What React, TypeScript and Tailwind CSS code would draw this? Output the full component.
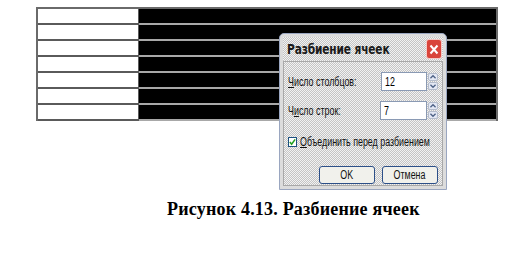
import React from 'react';

const rows = [0, 1, 2, 3, 4, 5, 6];

const dither =
  'bg-[repeating-conic-gradient(#c4c4c4_0_25%,#f2f2f2_0_50%)] bg-[length:2px_2px]';

// the dialog's font is narrow, so squeeze the text horizontally
const narrow = 'inline-block scale-x-[0.74] origin-left whitespace-nowrap';

const Spinner: React.FC = () => (
  <div className="w-[10px] h-[17px] ml-[1px] flex flex-col gap-[1px]">
    {['M1 5 L4 2 L7 5', 'M1 2 L4 5 L7 2'].map((d) => (
      <div key={d} className="flex-1 bg-[#e4e8f4] border border-[#b4bccc] rounded-[2px] flex items-center justify-center">
        <svg width="8" height="6" viewBox="0 0 8 7">
          <path d={d} fill="none" stroke="#4d6185" strokeWidth="1.5" />
        </svg>
      </div>
    ))}
  </div>
);

const Field: React.FC<{ label: string; value: string; ul: number }> = ({ label, value, ul }) => (
  <div className="flex items-center h-[19px]">
    <div className="w-[93px] text-[12px] text-[#111]">
      <span className={narrow}>
        {label.slice(0, ul)}
        <span className="underline">{label[ul]}</span>
        {label.slice(ul + 1)}
      </span>
    </div>
    <div className="w-[47px] h-[19px] bg-white border border-[#8a9ab4] flex items-center pl-[3px] text-[12px] text-black">
      <span className={narrow}>{value}</span>
    </div>
    <Spinner />
  </div>
);

const App: React.FC = () => {
  return (
    <div className="w-[518px] h-[261px] bg-white relative overflow-hidden font-['Liberation_Sans',sans-serif]">
      {/* table */}
      <div className="ml-[36px] mt-[7px] w-[462px] border-t-2 border-l-2 border-r-2 border-[#6a6a6a]">
        {rows.map((r) => (
          <div key={r} className="flex h-[16px]">
            <div className="w-[101px] bg-white border-b-2 border-r border-[#5a5a5a]" />
            <div className="flex-1 bg-black border-b-2 border-[#a8a8a8]" />
          </div>
        ))}
      </div>

      {/* caption */}
      <div className="ml-[167px] mt-[77px] text-[18px] leading-[22px] font-bold text-black font-['Liberation_Serif',serif] tracking-[0.2px]">
        Рисунок 4.13. Разбиение ячеек
      </div>

      {/* dialog */}
      <div className="absolute left-[279px] top-[33px] w-[168px] h-[157px] rounded-t-[5px] border border-[#9aa6c0] bg-[#dcdcdc] p-[3px] flex flex-col">
        <div className={`h-[24px] flex items-center justify-between pl-[4px] pr-[1px] ${dither}`}>
          <span className="text-[14px] font-semibold text-[#1a1a1a] tracking-[-0.2px] font-['DejaVu_Sans',sans-serif] scale-x-[0.76] origin-left whitespace-nowrap">
            Разбиение ячеек
          </span>
          <div className="w-[16px] h-[20px] rounded-[3px] bg-[#d9443a] border border-white/70 flex items-center justify-center">
            <svg width="10" height="11" viewBox="0 0 10 11">
              <path d="M1.5 1.5 L8.5 9.5 M8.5 1.5 L1.5 9.5" stroke="white" strokeWidth="2" />
            </svg>
          </div>
        </div>
        <div className={`flex-1 border border-[#a8a8a8] px-[4px] pt-[10px] ${dither}`}>
          <div className="flex flex-col gap-[10px]">
            <Field label="Число столбцов:" value="12" ul={0} />
            <Field label="Число строк:" value="7" ul={1} />
          </div>
          <div className="flex items-center mt-[13px] gap-[3px]">
            <div className="w-[9px] h-[10px] bg-white border border-[#1c5180] flex items-center justify-center">
              <svg width="8" height="8" viewBox="0 0 8 8">
                <path d="M1 4 L3 6.5 L7 1" fill="none" stroke="#21a121" strokeWidth="1.8" />
              </svg>
            </div>
            <span className={`text-[12px] text-[#111] ${narrow}`}>
              <span className="underline">О</span>бъединить перед разбиением
            </span>
          </div>
          <div className="flex justify-end gap-[7px] mt-[15px]">
            {['OK', 'Отмена'].map((t) => (
              <div
                key={t}
                className="w-[56px] h-[18px] rounded-[3px] border border-[#2c4f88] bg-[#f1f1ec] flex items-center justify-center text-[12px] text-[#111]"
              >
                <span className="inline-block scale-x-[0.74] whitespace-nowrap">{t}</span>
              </div>
            ))}
          </div>
        </div>
      </div>
    </div>
  );
};

export default App;
